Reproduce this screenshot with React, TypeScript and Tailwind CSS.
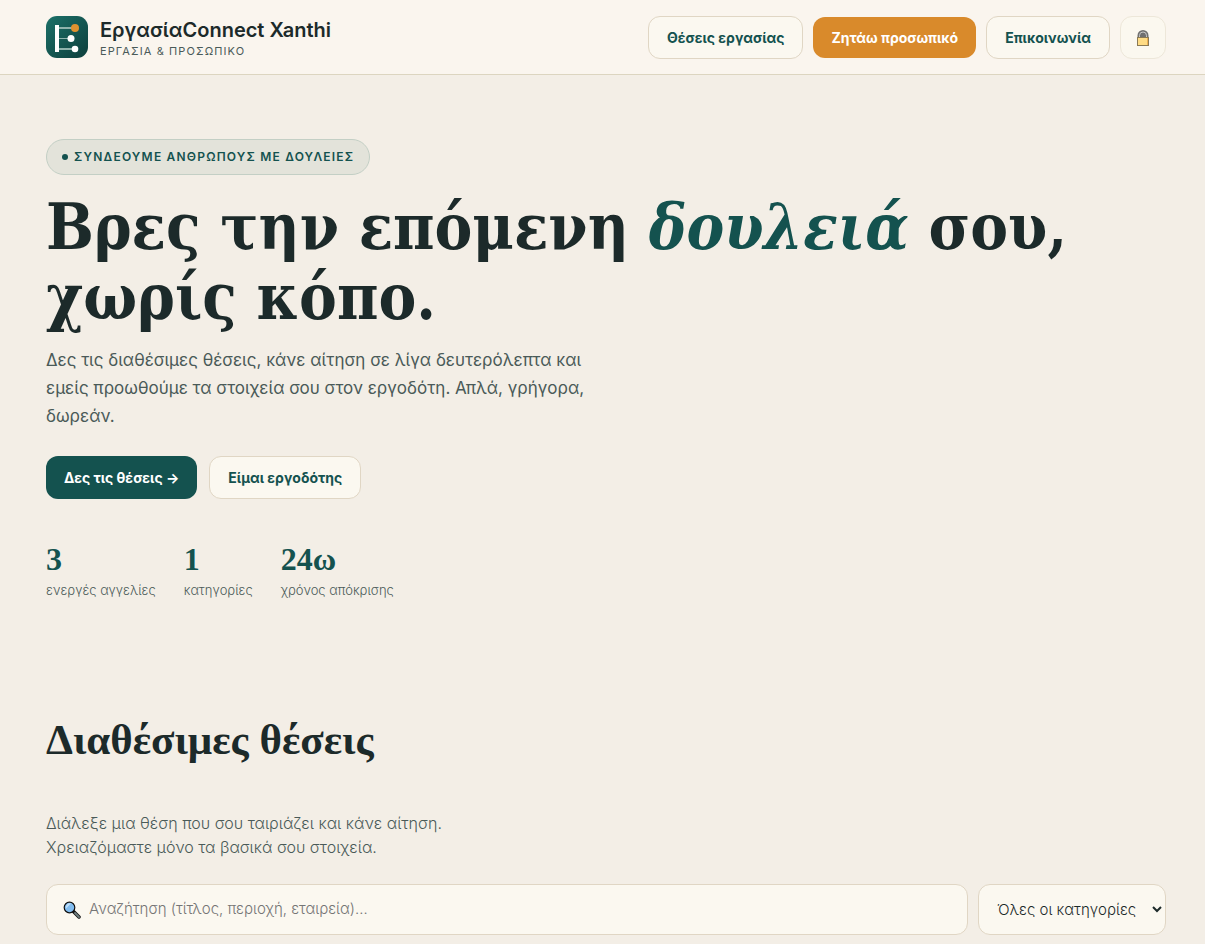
import { useState } from "react";

const stats = [
  { value: "3", label: "ενεργές αγγελίες" },
  { value: "1", label: "κατηγορίες" },
  { value: "24ω", label: "χρόνος απόκρισης" },
];

const Logo = () => (
  <svg viewBox="0 0 42 42" className="w-[42px] h-[42px] shrink-0" aria-hidden="true">
    <defs>
      <linearGradient id="logoBg" x1="0" y1="0" x2="1" y2="1">
        <stop offset="0" stopColor="#1c7068" />
        <stop offset="1" stopColor="#0d3f3c" />
      </linearGradient>
    </defs>
    <rect width="42" height="42" rx="11" fill="url(#logoBg)" />
    <path d="M13 12h13M13 33h13" stroke="#8fb3ac" strokeWidth="2" />
    <path d="M13 22.500h10" stroke="#8fb3ac" strokeWidth="1" />
    <rect x="9" y="9" width="4" height="27" fill="#fff" />
    <circle cx="29" cy="12" r="4" fill="#e0922f" />
    <circle cx="25" cy="22.500" r="3.500" fill="#fff" />
    <circle cx="29" cy="33" r="3.300" fill="#fff" />
  </svg>
);

const LockIcon = () => (
  <svg viewBox="0 0 14 18" className="w-[14px] h-[18px]" aria-hidden="true">
    <path d="M1.500 9V6.500a5.500 5.500 0 0 1 11 0V9z" fill="#707070" />
    <path d="M3.500 8.500V6.500a3.500 3.500 0 0 1 7 0v2" fill="none" stroke="#c9c9c9" strokeWidth="1" />
    <rect x="1.500" y="8.500" width="11" height="8" fill="#ffdc85" stroke="#8a7a55" />
    <path d="M11.500 9v7" stroke="#eeb052" />
  </svg>
);

const SearchIcon = () => (
  <svg viewBox="0 0 18 18" className="w-[18px] h-[18px] shrink-0" aria-hidden="true">
    <path d="M10.500 10.500l5.500 5.500" stroke="#111" strokeWidth="3.500" strokeLinecap="round" />
    <path d="M12 12l4 4" stroke="#6f7f80" strokeWidth="1.800" strokeLinecap="round" />
    <circle cx="6.500" cy="6.500" r="5.300" fill="#82bdf0" stroke="#111" strokeWidth="1.200" />
    <path d="M3 7.500a4 4 0 0 1 5-5z" fill="#bfe0fb" />
  </svg>
);

const Header = () => (
  <header className="bg-[#faf5ee] border-b border-[#dcd5c0]">
    <div className="flex flex-wrap items-start justify-between gap-4 pt-4 pb-[15px] pl-[46px] pr-[39px]">
      <a href="#" className="flex items-center gap-3">
        <Logo />
        <span className="flex flex-col">
          <span className="text-[20px] leading-7 font-semibold text-[#1c2a2a]">
            ΕργασίαConnect Xanthi
          </span>
          <span className="text-[11px] leading-[14px] tracking-widest text-[#4a5a58]">
            ΕΡΓΑΣΙΑ &amp; ΠΡΟΣΩΠΙΚΟ
          </span>
        </span>
      </a>
      <nav className="flex items-center gap-[10px] text-[14px] leading-[21px] font-bold">
        <button className="px-[18px] py-[10px] rounded-xl border border-[#e0d6c4] bg-[#fbf8f0] text-[#14524f]">
          Θέσεις εργασίας
        </button>
        <button className="px-[18px] py-[10px] rounded-xl bg-[#d98a2b] text-white">
          Ζητάω προσωπικό
        </button>
        <button className="px-[18px] py-[10px] rounded-xl border border-[#e0d6c4] bg-[#fbf8f0] text-[#14524f]">
          Επικοινωνία
        </button>
        <button
          aria-label="Διαχείριση"
          className="flex items-center justify-center w-[46px] h-[43px] rounded-xl border border-[#ede7d9] bg-[#fbf8ef]"
        >
          <LockIcon />
        </button>
      </nav>
    </div>
  </header>
);

const Hero = () => (
  <section className="pt-16 pl-[46px] pr-[39px]">
    <div className="flex w-fit items-center gap-[6px] h-9 px-[15px] rounded-full border border-[#c3cfc5] bg-[#e3e3da] text-[#14524f] text-[12px] font-semibold tracking-widest">
      <span className="w-[6px] h-[6px] rounded-full bg-[#14524f]"></span>
      ΣΥΝΔΕΟΥΜΕ ΑΝΘΡΩΠΟΥΣ ΜΕ ΔΟΥΛΕΙΕΣ
    </div>
    <h1 className="mt-[17px] max-w-[1120px] font-['DejaVu_Serif_Condensed','DejaVu_Serif',serif] text-[63px] leading-[70px] font-bold text-[#1c2a2a]">
      Βρες την επόμενη <em className="text-[#14524f]">δουλειά</em> σου,
      <br />
      χωρίς κόπο.
    </h1>
    <p className="mt-[14px] max-w-[560px] text-[17px] leading-7 text-[#4a5a58]">
      Δες τις διαθέσιμες θέσεις, κάνε αίτηση σε λίγα δευτερόλεπτα και εμείς
      προωθούμε τα στοιχεία σου στον εργοδότη. Απλά, γρήγορα, δωρεάν.
    </p>
    <div className="mt-[26px] flex gap-3 text-[14px] leading-[21px] font-bold">
      <button className="px-[18px] py-[11px] rounded-xl bg-[#14524f] text-white">
        Δες τις θέσεις →
      </button>
      <button className="px-[18px] py-[10px] rounded-xl border border-[#e0d6c4] bg-[#fbf8f0] text-[#14524f]">
        Είμαι εργοδότης
      </button>
    </div>
    <div className="mt-10 flex gap-7">
      {stats.map((s) => (
        <div key={s.label}>
          <p className="font-['Liberation_Serif',serif] text-[32px] leading-[41px] font-bold text-[#14524f]">
            {s.value}
          </p>
          <p className="text-[13px] leading-5 font-light text-[#4a5a58]">
            {s.label}
          </p>
        </div>
      ))}
    </div>
  </section>
);

const Jobs = () => {
  const [query, setQuery] = useState("");
  return (
    <section className="pt-[112px] pb-10 pl-[46px] pr-[39px]">
      <h2 className="font-['Liberation_Serif',serif] text-[43px] leading-[56px] font-bold text-[#1c2a2a]">
        Διαθέσιμες θέσεις
      </h2>
      <p className="mt-[43px] max-w-[420px] text-[16px] leading-6 font-light text-[#4a5a58]">
        Διάλεξε μια θέση που σου ταιριάζει και κάνε αίτηση.
        <br />
        Χρειαζόμαστε μόνο τα βασικά σου στοιχεία.
      </p>
      <div className="mt-[25px] flex gap-[10px]">
        <label className="flex flex-1 items-center gap-2 h-[51px] px-4 rounded-xl border border-[#e0d6c4] bg-[#fbf8f0]">
          <SearchIcon />
          <input
            type="text"
            aria-label="Αναζήτηση"
            value={query}
            onChange={(e) => setQuery(e.target.value)}
            placeholder="Αναζήτηση (τίτλος, περιοχή, εταιρεία)…"
            className="flex-1 min-w-0 bg-transparent outline-none text-[15px] font-light placeholder:text-[#757575]"
          />
        </label>
        <select
          aria-label="Κατηγορία"
          className="w-[188px] h-[51px] pl-[14px] rounded-xl border border-[#e0d6c4] bg-[#fbf8f0] text-[15px] font-light text-[#1c2a2a]"
        >
          <option>Όλες οι κατηγορίες</option>
        </select>
      </div>
    </section>
  );
};

export default function App() {
  return (
    <div className="min-h-screen bg-[#f3eee6] font-['Inter',sans-serif]">
      <Header />
      <main>
        <Hero />
        <Jobs />
      </main>
    </div>
  );
}
